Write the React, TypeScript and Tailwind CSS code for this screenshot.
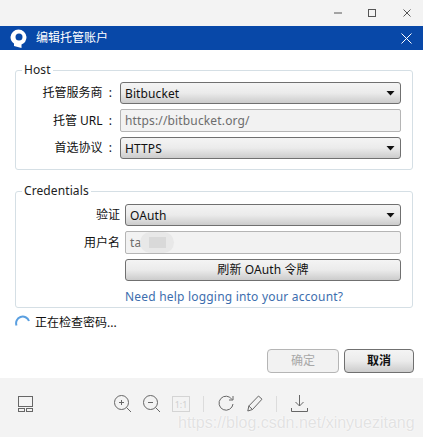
const font = { fontFamily: '"Noto Sans", "Noto Sans CJK SC", sans-serif' };

function Arrow() {
  return (
    <svg width="9" height="6" viewBox="0 0 9 6" className="shrink-0">
      <path d="M0.5 1H8.5L4.5 5.5Z" fill="#111" />
    </svg>
  );
}

function Select({ value }: { value: string }) {
  return (
    <div className="flex h-[22px] flex-1 items-center justify-between rounded-[3px] border border-[#707070] bg-gradient-to-b from-[#f4f4f4] via-[#ebebeb] to-[#cccccc] pl-[4px] pr-[5px] text-[12px] tracking-[0.1px] text-[#111]">
      <span className="pt-[2px]">{value}</span>
      <Arrow />
    </div>
  );
}

function Input({ value, children }: { value: string; children?: React.ReactNode }) {
  return (
    <div className="relative flex h-[23px] flex-1 items-center rounded-[2px] border border-[#b5b5b5] bg-[#f2f2f2] pl-[4px] text-[12px] tracking-[0.15px] text-[#6d6d6d]">
      <span>{value}</span>
      {children}
    </div>
  );
}

function Row({ label, left, pad, children }: { label: string; left: string; pad: string; children: React.ReactNode }) {
  return (
    <div className="flex items-center">
      <div className={`${left} ${pad} shrink-0 text-right text-[12px] text-[#111]`}>{label}</div>
      {children}
    </div>
  );
}

function Group({ title, className, children }: { title: string; className: string; children: React.ReactNode }) {
  return (
    <fieldset className={`ml-[15px] mr-[10px] rounded-[3px] border border-[#d5dfe5] pr-[11px] ${className}`}>
      <legend className="ml-[6px] px-[2px] text-[12px] leading-[14px] tracking-[0.1px] text-[#222]">{title}</legend>
      {children}
    </fieldset>
  );
}

export default function App() {
  return (
    <div className="relative flex h-[437px] w-[423px] flex-col overflow-hidden bg-white" style={font}>
      {/* window chrome */}
      <div className="flex h-[26px] items-center justify-end bg-[#f3f3f3] pr-[12px]">
        <svg width="8" height="2" viewBox="0 0 8 2" className="mr-[26px]"><path d="M0 1H8" stroke="#555" strokeWidth="1" /></svg>
        <svg width="8" height="8" viewBox="0 0 8 8" className="mr-[27px]"><rect x="0.5" y="0.5" width="7" height="7" fill="none" stroke="#555" /></svg>
        <svg width="8" height="8" viewBox="0 0 8 8"><path d="M.5.5L7.5 7.5M7.5.5L.5 7.5" stroke="#555" strokeWidth="1" /></svg>
      </div>

      {/* title bar */}
      <div className="flex h-[24px] items-center justify-between bg-[#0848a8] pl-[10px] pr-[11px]">
        <div className="flex items-center">
          <svg width="17" height="19" viewBox="0 0 17 19">
            <path d="M8.5 0.5A8 8 0 0 1 16.5 8 8 8 0 0 1 11.5 15.4V19L4 17V14.6A8 8 0 0 1 .5 8 8 8 0 0 1 8.5 .5Z" fill="#fff" />
            <circle cx="9" cy="8" r="3.5" fill="#0848a8" />
          </svg>
          <span className="ml-[9px] text-[12px] text-white">编辑托管账户</span>
        </div>
        <svg width="11" height="11" viewBox="0 0 11 11"><path d="M.5.5L10.5 10.5M10.5.5L.5 10.5" stroke="#fff" strokeWidth="1" /></svg>
      </div>

      <div className="flex flex-col pt-[13px]">
        <Group title="Host" className="h-[107px]">
          <div className="flex flex-col gap-[5px] pt-[5px]">
            <Row label="托管服务商&nbsp; :" left="w-[104px]" pad="pr-[8px]"><Select value="Bitbucket" /></Row>
            <Row label="托管 URL&nbsp; :" left="w-[104px]" pad="pr-[8px]"><Input value="https://bitbucket.org/" /></Row>
            <Row label="首选协议&nbsp; :" left="w-[104px]" pad="pr-[8px]"><Select value="HTTPS" /></Row>
          </div>
        </Group>

        <Group title="Credentials" className="mt-[14px] h-[124px]">
          <div className="flex flex-col gap-[5px] pt-[6px]">
            <Row label="验证" left="w-[109px]" pad="pr-[5px]"><Select value="OAuth" /></Row>
            <Row label="用户名" left="w-[109px]" pad="pr-[5px]">
              <Input value="ta">
                <span className="absolute left-[14px] top-0 flex h-[21px] w-[34px] items-center justify-center rounded-[11px] bg-[#e8e8e8]">
                  <span className="h-[11px] w-[17px] bg-[#d9d9d9]" />
                </span>
              </Input>
            </Row>
            <div className="flex pl-[109px]">
              <div className="flex h-[22px] flex-1 items-center justify-center rounded-[3px] border border-[#707070] bg-gradient-to-b from-[#f4f4f4] via-[#ebebeb] to-[#cccccc] text-[12px] tracking-[0.1px] text-[#111]">
                刷新 OAuth 令牌
              </div>
            </div>
            <div className="pl-[109px] text-[12px] leading-[22px] tracking-[0.2px] text-[#3d6eae]">Need help logging into your account?</div>
          </div>
        </Group>

        <div className="mt-[6px] flex items-center pl-[15px] text-[12px] leading-[18px] text-[#111]">
          <svg width="16" height="16" viewBox="0 0 16 16" className="mr-[4px]">
            <path d="M1.5 10.5A6.5 6.5 0 0 1 14 6" fill="none" stroke="#5a9fe0" strokeWidth="2" />
          </svg>
          正在检查密码...
        </div>

        <div className="mt-[17px] flex justify-end gap-[5px] pr-[9px]">
          <div className="flex h-[24px] w-[72px] items-center justify-center rounded-[4px] border border-[#b5b5b5] bg-[#f2f2f2] text-[12px] text-[#a8a8a8]">确定</div>
          <div className="flex h-[24px] w-[70px] items-center justify-center rounded-[4px] border border-[#707070] bg-gradient-to-b from-[#f4f4f4] via-[#ebebeb] to-[#cccccc] text-[12px] font-bold text-[#111]">取消</div>
        </div>
      </div>

      {/* bottom toolbar */}
      <div className="absolute inset-x-0 bottom-0 flex h-[59px] items-start bg-[#f3f3f3] pl-[18px] pt-[17px]">
        <svg width="16" height="16" viewBox="0 0 16 16" fill="none" stroke="#666" className="mt-px">
          <rect x=".5" y=".5" width="14" height="10" />
          <rect x=".5" y="12.5" width="6" height="3" />
          <rect x="8.5" y="12.5" width="6" height="3" />
        </svg>
        <svg width="18" height="18" viewBox="0 0 18 18" fill="none" stroke="#666" className="ml-[80px]">
          <circle cx="7.5" cy="7.5" r="7" />
          <path d="M12.5 12.5L17 17M5 7.5H10M7.5 5V10" />
        </svg>
        <svg width="18" height="18" viewBox="0 0 18 18" fill="none" stroke="#666" className="ml-[11px]">
          <circle cx="7.5" cy="7.5" r="7" />
          <path d="M12.5 12.5L17 17M5 7.5H10" />
        </svg>
        <div className="ml-[11px] mt-px flex h-[16px] w-[18px] items-center justify-center border border-[#d4d4d4] text-[9px] leading-none text-[#d0d0d0]">1:1</div>
        <div className="ml-[13px] mt-px h-[16px] w-px bg-[#dcdcdc]" />
        <svg width="16" height="17" viewBox="0 0 16 17" fill="none" stroke="#666" className="ml-[14px]">
          <path d="M14 4.5A7 7 0 1 0 15 9M15 1V5H11" />
        </svg>
        <svg width="16" height="17" viewBox="0 0 16 17" fill="none" stroke="#666" className="ml-[13px]">
          <path d="M.8 16L1.8 11L11.5 1L15 4.2L5.5 14.5ZM1.8 11L5.5 14.5" />
        </svg>
        <div className="ml-[13px] mt-px h-[16px] w-px bg-[#dcdcdc]" />
        <svg width="17" height="17" viewBox="0 0 17 17" fill="none" stroke="#666" className="ml-[14px]">
          <path d="M8.5 0V11M4.5 7L8.5 11L12.5 7M.5 13V16.5H16.5V13" />
        </svg>
      </div>

      {/* watermark */}
      <div className="absolute left-[178px] top-[411px] text-[16px] text-[#e2e2e2] [text-shadow:0_0_1px_#fff,0_0_2px_#fff]" style={{ fontFamily: '"Liberation Sans", sans-serif' }}>
        https://blog.csdn.net/xinyuezitang
      </div>
    </div>
  );
}
